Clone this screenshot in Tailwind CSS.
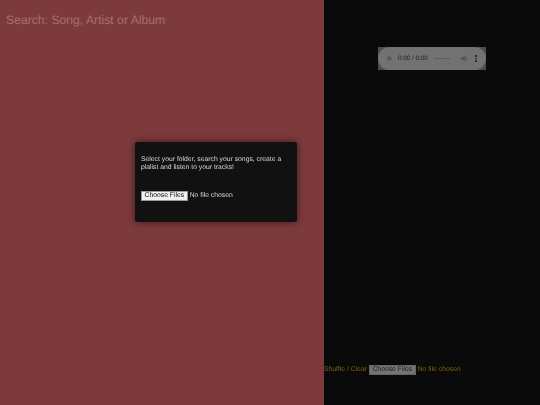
<!DOCTYPE html>
<html lang="en">
<head>
    <meta charset="UTF-8">
    <meta name="viewport" content="width=device-width, initial-scale=1.0">
    <title>Music Player</title>
    <script src="https://cdn.jsdelivr.net/npm/@tailwindcss/browser@4"></script>
</head>
<body class="w-[540px] h-[405px] overflow-hidden bg-[#0a0a0a]">
<div class="relative flex w-[540px] h-[405px] overflow-hidden blur-[0.3px] font-['Liberation_Sans',Arial,sans-serif] [text-rendering:geometricPrecision]">
    <div class="w-[324px] h-full bg-[#7d3a3c] px-[6px] pt-[13px]">
        <input type="text" placeholder="Search: Song, Artist or Album" class="w-full block bg-transparent outline-none text-[12.2px] leading-[14px] [text-rendering:geometricPrecision] placeholder:text-[#a66e70]">
    </div>

    <div class="flex-1 h-full flex flex-col">
        <div class="mt-[47px] ml-[54px] w-[108px] h-[23px] bg-[#3f5357]">
            <div class="w-full h-full rounded-[12px] bg-[#727272] flex items-center pl-[9px] pr-[9px]">
                <svg class="w-[6px] h-[7px]" viewBox="0 0 6 7"><path d="M0.5 0.5 L5.5 3.5 L0.5 6.5 Z" fill="#585858"/></svg>
                <span class="ml-[5px] text-[6.3px] text-[#1c1c1c] whitespace-nowrap">0:00 / 0:00</span>
                <div class="ml-[6px] w-[16px] h-[1.5px] bg-[#5e5e5e]"></div>
                <svg class="ml-[11px] w-[8px] h-[7px]" viewBox="0 0 8 7"><path d="M0 2.2 H2 L4.5 0 V7 L2 4.8 H0 Z M5.5 1.5 Q7.5 3.5 5.5 5.5 Z" fill="#555"/></svg>
                <div class="ml-[6px] flex flex-col gap-[1px]">
                    <div class="w-[2px] h-[1.5px] bg-[#2c2c2c]"></div>
                    <div class="w-[2px] h-[1.5px] bg-[#2c2c2c]"></div>
                    <div class="w-[2px] h-[1.5px] bg-[#2c2c2c]"></div>
                </div>
            </div>
        </div>

        <div class="mt-[295px] flex items-center h-[11px] text-[6.8px] text-[#7a640f] whitespace-nowrap will-change-transform">
            <span>Shuffle / Clear</span>
            <input type="file" multiple class="ml-[2px] w-[110px] text-[6.8px] text-[#7a640f] [text-rendering:geometricPrecision] file:mr-[2px] file:h-[10px] file:py-0 file:px-[2.5px] file:bg-[#737373] file:text-[#1c1c1c] file:text-[6.8px] file:leading-[8px] file:border file:border-[#666] file:[text-rendering:geometricPrecision]">
        </div>
    </div>

    <!-- dialog over the page -->
    <div class="absolute left-[135px] top-[142px] w-[162px] h-[80px] rounded-[2px] bg-[#111] shadow-[0_0_8px_rgba(0,0,0,0.55)] px-[6px] pt-[13.5px] text-[6.8px] leading-[8px] text-[#d8d8d8]">
        <p class="will-change-transform">Select your folder, search your songs, create a plalist and listen to your tracks!</p>
        <input type="file" multiple class="mt-[19px] w-[140px] text-[6.8px] text-[#d8d8d8] will-change-transform [text-rendering:geometricPrecision] file:mr-[2px] file:h-[10px] file:py-0 file:px-[2.5px] file:bg-[#f0f0f0] file:text-[#111] file:text-[6.8px] file:leading-[8px] file:border file:border-[#999] file:[text-rendering:geometricPrecision]">
    </div>
</div>
</body>
</html>
